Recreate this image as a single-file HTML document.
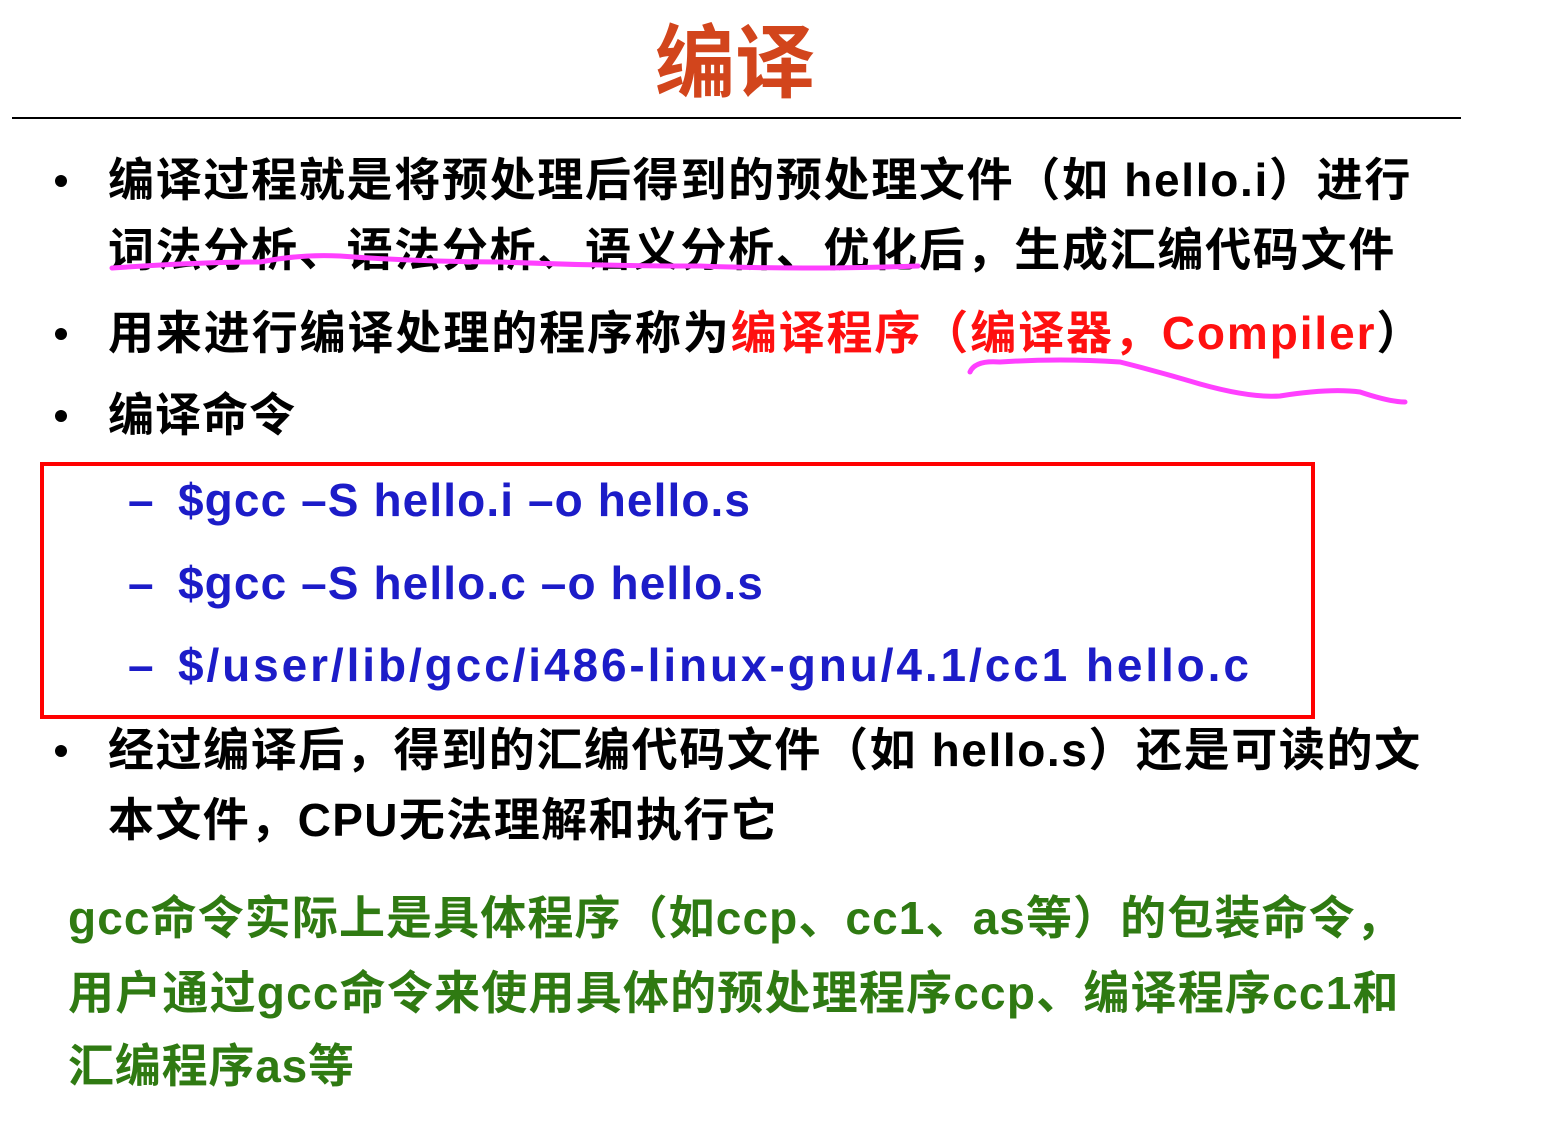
<!DOCTYPE html>
<html><head><meta charset="utf-8"><style>
html,body{margin:0;padding:0;background:#fff;width:1559px;height:1127px;overflow:hidden;position:relative}
.t{position:absolute;white-space:nowrap;font-family:"Liberation Sans","Noto Sans CJK SC",sans-serif;font-weight:bold;font-size:46px;line-height:60px;color:#000}
.b{position:absolute;width:12px;height:12px;border-radius:50%;background:#000;left:55px}
.blue{color:#1c1cc8}
.red{color:#ff1010}
.green{color:#2f7a12}
</style></head><body>
<div class="t" style="left:0;width:1470px;text-align:center;top:12px;font-size:80px;line-height:90px;color:#d2451c;font-family:'Noto Sans CJK SC',sans-serif;font-weight:bold">编译</div>
<div style="position:absolute;left:12px;top:117px;width:1449px;height:2px;background:#000"></div>

<div class="b" style="top:175px"></div>
<div class="t" style="left:108px;top:150px;letter-spacing:1.7px">编译过程就是将预处理后得到的预处理文件（如 hello.i）进行</div>
<div class="t" style="left:108px;top:220px;letter-spacing:1.7px">词法分析、语法分析、语义分析、优化后，生成汇编代码文件</div>
<div class="b" style="top:328px"></div>
<div class="t" style="left:108px;top:303px;letter-spacing:1.9px">用来进行编译处理的程序称为<span class="red">编译程序（编译器，Compiler</span>）</div>
<div class="b" style="top:410px"></div>
<div class="t" style="left:108px;top:385px;letter-spacing:1px">编译命令</div>

<div style="position:absolute;left:40px;top:462px;width:1267px;height:249px;border:4px solid #f00"></div>
<div class="t blue" style="left:128px;top:470px">–</div>
<div class="t blue" style="left:178px;top:470px;letter-spacing:1.1px">$gcc –S hello.i –o hello.s</div>
<div class="t blue" style="left:128px;top:553px">–</div>
<div class="t blue" style="left:178px;top:553px;letter-spacing:1.1px">$gcc –S hello.c –o hello.s</div>
<div class="t blue" style="left:128px;top:635px">–</div>
<div class="t blue" style="left:178px;top:635px;letter-spacing:2.9px">$/user/lib/gcc/i486-linux-gnu/4.1/cc1 hello.c</div>

<div class="b" style="top:745px"></div>
<div class="t" style="left:108px;top:720px;letter-spacing:1.6px">经过编译后，得到的汇编代码文件（如 hello.s）还是可读的文</div>
<div class="t" style="left:108px;top:790px;letter-spacing:1.4px">本文件，CPU无法理解和执行它</div>

<div class="t green" style="left:68px;top:888px;letter-spacing:1.1px">gcc命令实际上是具体程序（如ccp、cc1、as等）的包装命令，</div>
<div class="t green" style="left:68px;top:963px;letter-spacing:1.2px">用户通过gcc命令来使用具体的预处理程序ccp、编译程序cc1和</div>
<div class="t green" style="left:68px;top:1036px;letter-spacing:0.8px">汇编程序as等</div>

<svg style="position:absolute;left:0;top:0" width="1559" height="1127">
<path d="M112 268 Q200 262 260 262 Q300 254 340 256 Q420 262 500 262 Q600 266 700 266 Q800 270 918 266" stroke="#ff40ff" stroke-width="5" fill="none" stroke-linecap="round"/>
<path d="M970 372 Q975 360 1000 362 Q1060 358 1120 362 Q1160 372 1200 384 Q1250 398 1280 396 Q1330 388 1360 392 Q1390 402 1405 402" stroke="#ff40ff" stroke-width="5" fill="none" stroke-linecap="round"/>
</svg>
</body></html>
